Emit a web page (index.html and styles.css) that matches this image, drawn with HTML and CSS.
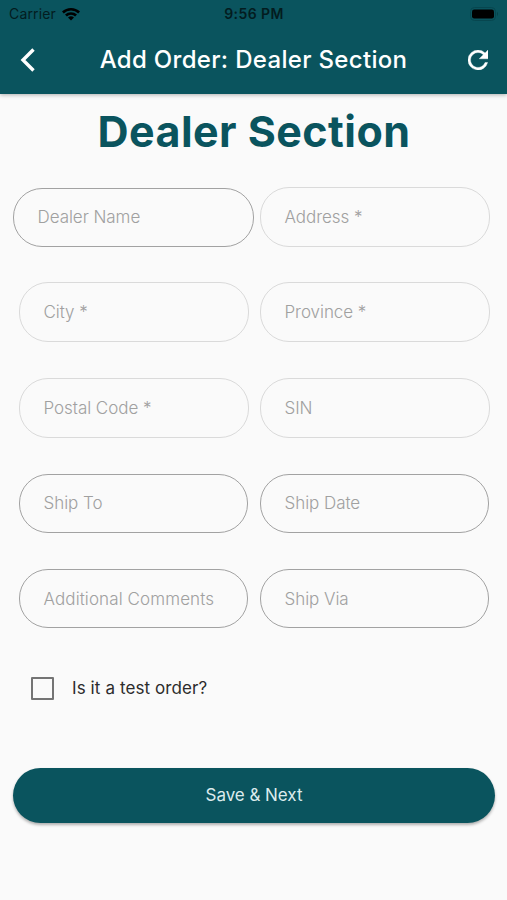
FILE: index.html
```html
<!DOCTYPE html>
<html lang="en">
<head>
<meta charset="utf-8">
<title>Add Order: Dealer Section</title>
<link rel="stylesheet" href="styles.css">
</head>
<body>
<header class="top">
  <div class="status">
    <div class="carrier"><span>Carrier</span>
      <svg class="wifi" viewBox="0 0 18 14" width="18" height="14"><path d="M0 4.5A13 13 0 0 1 18 4.5L16.2 6.4A10.2 10.2 0 0 0 1.8 6.4Z"/><path d="M3 7.6A8.6 8.6 0 0 1 15 7.6L13.1 9.5A5.9 5.9 0 0 0 4.9 9.5Z"/><path d="M6 10.6A4.3 4.3 0 0 1 12 10.6L9 13.6Z"/></svg>
    </div>
    <div class="time">9:56 PM</div>
    <svg class="battery" viewBox="0 0 29 14" width="29" height="14"><rect x=".5" y=".5" width="25" height="13" rx="4" fill="none" stroke="#07464f"/><rect x="2" y="2.5" width="22" height="9" rx="2.2"/><path d="M27 4.8q2 2.2 0 4.4z" fill="#06424a"/></svg>
  </div>
  <div class="bar">
    <svg class="back" viewBox="0 0 16 26" width="16" height="26"><path d="M13.5 2.5L3 13L13.5 23.5" fill="none" stroke="#fff" stroke-width="3.4"/></svg>
    <div class="title">Add Order: Dealer Section</div>
    <svg class="refresh" viewBox="4 4 16 16" width="20" height="20"><path fill="#fff" stroke="#fff" stroke-width=".3" d="M17.65 6.35A7.95 7.95 0 0 0 12 4a8 8 0 1 0 7.73 10h-2.08A6 6 0 1 1 12 6c1.66 0 3.14.69 4.22 1.78L13 11h7V4z"/></svg>
  </div>
</header>
<main>
  <h1>Dealer Section</h1>
  <form class="fields">
    <div class="field strong wide">Dealer Name</div>
    <div class="field">Address *</div>
    <div class="field">City *</div>
    <div class="field">Province *</div>
    <div class="field">Postal Code *</div>
    <div class="field">SIN</div>
    <div class="field strong">Ship To</div>
    <div class="field strong">Ship Date</div>
    <div class="field strong comments">Additional Comments</div>
    <div class="field strong">Ship Via</div>
  </form>
  <div class="check"><span class="box"></span><span class="check-label">Is it a test order?</span></div>
  <div class="save">Save &amp; Next</div>
</main>
</body>
</html>
```
FILE: styles.css
```css
* { box-sizing: border-box; }
body {
  margin: 0;
  height: 900px;
  overflow: hidden;
  background: #fafafa;
  font-family: Inter, "Liberation Sans", sans-serif;
}
.top {
  height: 94px;
  background: #0a545e;
  box-shadow: 0 1px 4px rgba(0, 0, 0, .3);
}
.status {
  height: 27px;
  padding: 0 8px 0 9px;
  display: grid;
  grid-template-columns: 1fr auto 1fr;
  align-items: center;
  font-size: 14px;
  color: #031c20;
}
.carrier { display: flex; align-items: center; gap: 6px; letter-spacing: .15px; }
.wifi { fill: #000; }
.time { font-weight: 600; letter-spacing: .4px; }
.battery { justify-self: end; }
.bar {
  height: 65px;
  padding: 0 19px 0 20px;
  display: flex;
  align-items: center;
  justify-content: space-between;
}
.title {
  margin-left: 3px;
  color: #fff;
  font-size: 24px;
  font-weight: 500;
  letter-spacing: .32px;
  white-space: nowrap;
}
h1 {
  margin: 12px 0 0 1px;
  height: 50px;
  line-height: 50px;
  text-align: center;
  color: #0a545e;
  font-size: 43px;
  font-weight: 700;
  letter-spacing: .45px;
}
.fields {
  margin: 31px 17px 0 18.5px;
  display: grid;
  grid-template-columns: 230px 230px;
  grid-auto-rows: 60px;
  gap: 35.4px 11px;
}
.field {
  display: flex;
  align-items: center;
  padding-left: 24px;
  border: 1px solid #dadada;
  border-radius: 29px;
  color: #a0a0a0;
  font-size: 17px;
  font-weight: 300;
  letter-spacing: -.05px;
  white-space: nowrap;
}
.strong { border: 1px solid #a2a2a2; margin: .5px; padding-left: 23.5px; }
.wide { margin: .5px -5.5px; }
.comments { letter-spacing: .1px; }
.check {
  margin: 48px 0 0 31px;
  height: 23px;
  display: flex;
  align-items: center;
  gap: 18px;
}
.box { width: 23px; height: 23px; border: 2px solid #747474; border-radius: 1px; }
.check-label { font-size: 17px; letter-spacing: .1px; color: #2c2c2c; }
.save {
  margin: 68px 12px 0 13px;
  height: 55px;
  display: flex;
  align-items: center;
  justify-content: center;
  border-radius: 28px;
  background: #0a545e;
  box-shadow: 0 2px 3px rgba(0, 0, 0, .3);
  color: #dcebed;
  font-size: 17px;
  letter-spacing: -.05px;
}
```
